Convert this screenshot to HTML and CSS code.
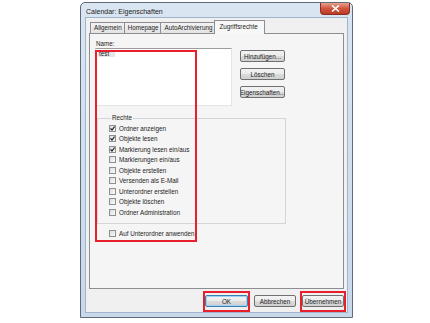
FILE: index.html
```html
<!DOCTYPE html>
<html lang="de">
<head>
    <meta charset="UTF-8">
    <title>Calendar: Eigenschaften</title>
    <link rel="stylesheet" href="styles.css">
</head>
<body>
    <div class="window">
        <!-- Title bar -->
        <div class="titlebar">
            <span class="title">Calendar: Eigenschaften</span>
            <span class="close">
                <svg width="9" height="7" viewBox="0 0 9 7"><path d="M1 0.5 L8 6.5 M8 0.5 L1 6.5" stroke="#fff" stroke-width="1.6"/></svg>
            </span>
        </div>

        <div class="client">
            <!-- Tabs -->
            <div class="tabs">
                <span class="tab">Allgemein</span>
                <span class="tab">Homepage</span>
                <span class="tab">AutoArchivierung</span>
                <span class="tab active">Zugriffsrechte</span>
            </div>

            <!-- Tab page -->
            <div class="panel">
                <div class="label">Name:</div>
                <div class="top-row">
                    <div class="list"><span class="item">test</span></div>
                    <div class="side-buttons">
                        <button class="btn">Hinzufügen...</button>
                        <button class="btn">Löschen</button>
                        <button class="btn">Eigenschaften...</button>
                    </div>
                </div>

                <fieldset class="group">
                    <legend>Rechte</legend>
                    <div class="check"><span class="box checked"><svg width="5" height="5" viewBox="0 0 5 5"><path d="M0.5 2.3 L2 4 L4.6 0.6" fill="none" stroke="#222" stroke-width="1.2"/></svg></span>Ordner anzeigen</div>
                    <div class="check"><span class="box checked"><svg width="5" height="5" viewBox="0 0 5 5"><path d="M0.5 2.3 L2 4 L4.6 0.6" fill="none" stroke="#222" stroke-width="1.2"/></svg></span>Objekte lesen</div>
                    <div class="check"><span class="box checked"><svg width="5" height="5" viewBox="0 0 5 5"><path d="M0.5 2.3 L2 4 L4.6 0.6" fill="none" stroke="#222" stroke-width="1.2"/></svg></span>Markierung lesen ein/aus</div>
                    <div class="check"><span class="box"></span>Markierungen ein/aus</div>
                    <div class="check"><span class="box"></span>Objekte erstellen</div>
                    <div class="check"><span class="box"></span>Versenden als E-Mail</div>
                    <div class="check"><span class="box"></span>Unterordner erstellen</div>
                    <div class="check"><span class="box"></span>Objekte löschen</div>
                    <div class="check"><span class="box"></span>Ordner Administration</div>
                </fieldset>

                <div class="check apply"><span class="box"></span>Auf Unterordner anwenden</div>

                <!-- red annotation frame -->
                <div class="highlight"></div>
            </div>

            <!-- Dialog buttons -->
            <div class="footer">
                <span class="mark"><button class="btn wide default">OK</button></span>
                <button class="btn wide">Abbrechen</button>
                <span class="mark"><button class="btn wide">Übernehmen</button></span>
            </div>
        </div>
    </div>
</body>
</html>
```

FILE: styles.css
```css
html, body {
    margin: 0;
    background: #fff;
}
body {
    width: 430px;
    height: 323px;
    font-family: "Liberation Sans", Arial, sans-serif;
    font-size: 6.3px;
    color: #1c1c1c;
}
.window {
    box-sizing: border-box;
    margin: 2px 0 0 80px;
    width: 273px;
    height: 316px;
    border: 1px solid #5f6b7a;
    border-radius: 5px 5px 0 0;
    background: linear-gradient(#dae5f2, #c8d8ea);
    padding: 0 4px 4px 4px;
    display: flex;
    flex-direction: column;
}
.titlebar {
    height: 16px;
    display: flex;
    justify-content: space-between;
    align-items: flex-start;
}
.title {
    font-size: 7px;
    color: #222;
    padding: 5px 0 0 1px;
}
.close {
    width: 28px;
    height: 11px;
    margin-right: -2px;
    border: 1px solid #8b2d20;
    border-top: none;
    border-radius: 0 0 4px 4px;
    background: linear-gradient(#e7a08f, #d0553e 50%, #bd3a24);
    display: flex;
    align-items: center;
    justify-content: center;
}
.client {
    flex: 1;
    border: 1px solid #9fb4cd;
    background: #f0f0f0;
    padding: 3px 3px 0 3px;
    display: flex;
    flex-direction: column;
}
.tabs {
    height: 12px;
    display: flex;
    align-items: flex-end;
    padding-left: 1px;
}
.tab {
    height: 10px;
    line-height: 10px;
    padding: 0 2px 0 3px;
    border: 1px solid #8c8e94;
    border-bottom: none;
    margin-right: -1px;
    background: linear-gradient(#f2f2f2, #e3e3e3);
    white-space: nowrap;
}
.tab.active {
    height: 13px;
    line-height: 11px;
    margin-bottom: -1px;
    padding: 0 6px 0 4px;
    background: #f7f7f7;
    position: relative;
    z-index: 1;
}
.panel {
    height: 256px;
    box-sizing: border-box;
    border: 1px solid #8c8e94;
    background: #f5f5f5;
    padding: 5px 5px 0 5px;
    position: relative;
}
.label {
    line-height: 9px;
    padding-left: 1px;
}
.top-row {
    display: flex;
}
.list {
    box-sizing: border-box;
    width: 137px;
    height: 58px;
    background: #fff;
    border: 1px solid #e4e4e4;
    border-top-color: #9c9c9c;
    padding: 1px 1px 1px 2px;
}
.item {
    display: inline-block;
    width: 16px;
    line-height: 7px;
    padding-left: 1px;
    background: #e6e6e6;
}
.side-buttons {
    display: flex;
    flex-direction: column;
    gap: 6px;
    margin: 2px 0 0 8px;
}
.btn {
    box-sizing: border-box;
    width: 45px;
    height: 12px;
    padding: 0;
    font: inherit;
    color: #1c1c1c;
    border: 1px solid #707070;
    border-radius: 2px;
    background: linear-gradient(#f3f3f3, #ebebeb 50%, #dcdcdc 50%, #cfcfcf);
    display: flex;
    align-items: center;
    justify-content: center;
    overflow: hidden;
    white-space: nowrap;
}
.btn.wide {
    width: 42px;
}
.btn.default {
    width: 43px;
    border-color: #3c7fb1;
    box-shadow: inset 0 0 0 1px #9fd3f5;
}
.group {
    margin: 8px 0 0 2px;
    width: 189px;
    box-sizing: border-box;
    border: 1px solid #d2d6da;
    padding: 1px 0 5px 11px;
    min-width: 0;
}
.group legend {
    padding: 0 1px;
    margin-left: 2px;
    line-height: 8px;
}
.check {
    height: 10.5px;
    display: flex;
    align-items: center;
    gap: 3px;
    white-space: nowrap;
}
.check.apply {
    margin: 5px 0 0 14px;
}
.box {
    box-sizing: border-box;
    width: 7px;
    height: 7px;
    border: 1px solid #8e8f8f;
    background: linear-gradient(135deg, #dcdcdc, #fafafa);
    display: flex;
    align-items: center;
    justify-content: center;
}
.highlight {
    position: absolute;
    left: 5px;
    top: 16px;
    width: 102px;
    height: 192px;
    box-sizing: border-box;
    border: 2px solid #e8202c;
    pointer-events: none;
}
.footer {
    flex: 1;
    display: flex;
    justify-content: flex-end;
    align-items: flex-start;
    gap: 6px;
    padding-top: 6px;
}
.mark {
    border: 2px solid #e8202c;
    margin: -4px -2px 0;
    padding: 2px 0 3px;
}
```
